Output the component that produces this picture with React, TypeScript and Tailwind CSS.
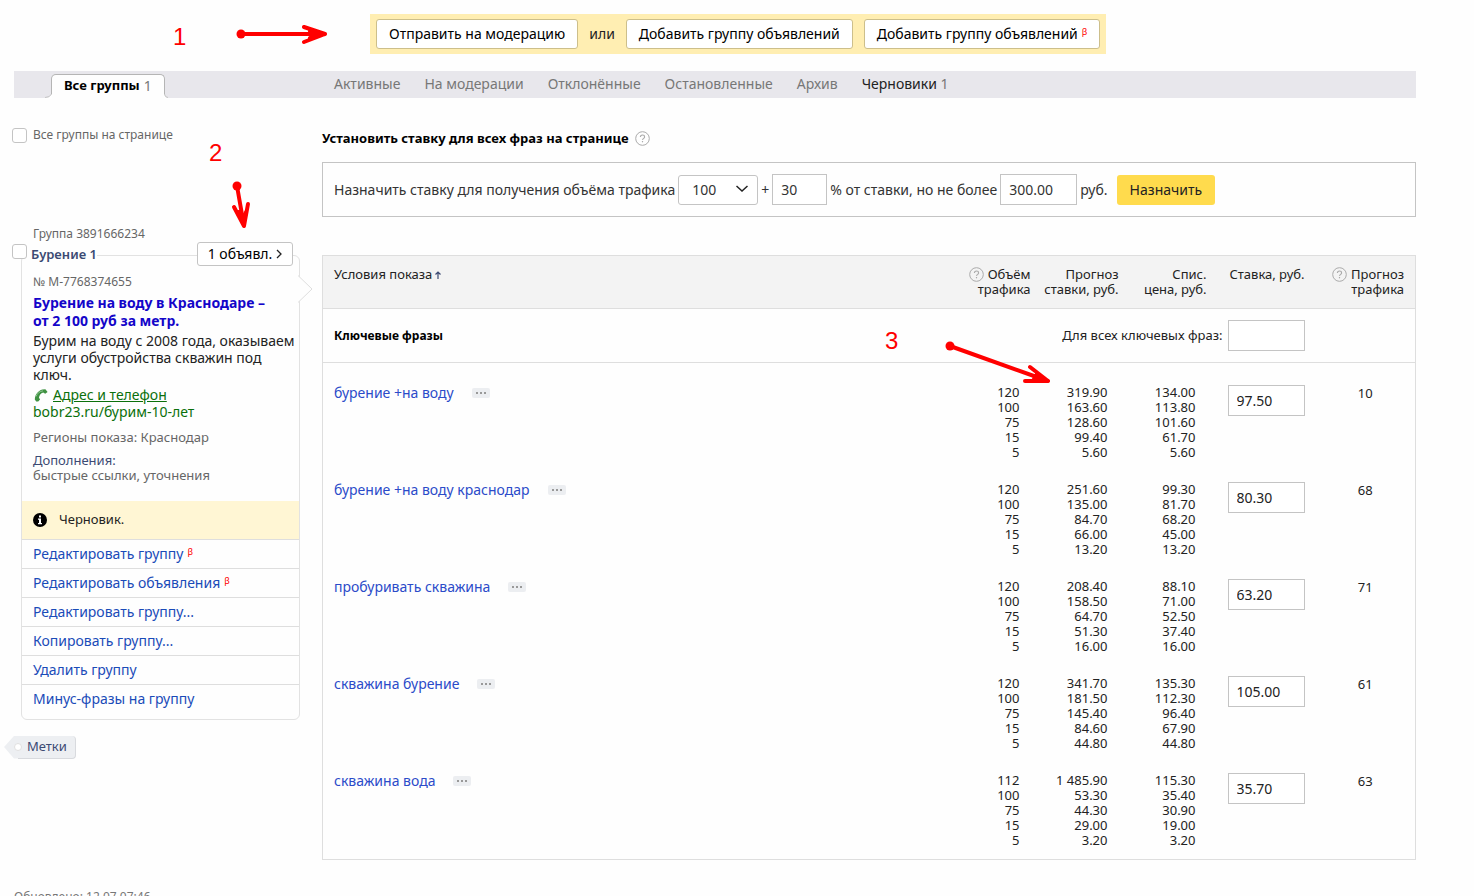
import type { ReactNode } from 'react'

interface Bid {
  volume: string
  forecast: string
  price: string
}

interface Phrase {
  id: number
  text: string
  bids: Bid[]
  bid: string
  traffic: number
}

const toBids = (rows: string[][]): Bid[] =>
  rows.map(([volume, forecast, price]) => ({ volume, forecast, price }))

const phrases: Phrase[] = [
  {
    id: 1,
    text: 'бурение +на воду',
    bids: toBids([['120', '319.90', '134.00'], ['100', '163.60', '113.80'], ['75', '128.60', '101.60'], ['15', '99.40', '61.70'], ['5', '5.60', '5.60']]),
    bid: '97.50',
    traffic: 10
  },
  {
    id: 2,
    text: 'бурение +на воду краснодар',
    bids: toBids([['120', '251.60', '99.30'], ['100', '135.00', '81.70'], ['75', '84.70', '68.20'], ['15', '66.00', '45.00'], ['5', '13.20', '13.20']]),
    bid: '80.30',
    traffic: 68
  },
  {
    id: 3,
    text: 'пробуривать скважина',
    bids: toBids([['120', '208.40', '88.10'], ['100', '158.50', '71.00'], ['75', '64.70', '52.50'], ['15', '51.30', '37.40'], ['5', '16.00', '16.00']]),
    bid: '63.20',
    traffic: 71
  },
  {
    id: 4,
    text: 'скважина бурение',
    bids: toBids([['120', '341.70', '135.30'], ['100', '181.50', '112.30'], ['75', '145.40', '96.40'], ['15', '84.60', '67.90'], ['5', '44.80', '44.80']]),
    bid: '105.00',
    traffic: 61
  },
  {
    id: 5,
    text: 'скважина вода',
    bids: toBids([['112', '1 485.90', '115.30'], ['100', '53.30', '35.40'], ['75', '44.30', '30.90'], ['15', '29.00', '19.00'], ['5', '3.20', '3.20']]),
    bid: '35.70',
    traffic: 63
  }
]

const tabs = ['Активные', 'На модерации', 'Отклонённые', 'Остановленные', 'Архив']

const groupActions = [
  { label: 'Редактировать группу', beta: true },
  { label: 'Редактировать объявления', beta: true },
  { label: 'Редактировать группу...', beta: false },
  { label: 'Копировать группу...', beta: false },
  { label: 'Удалить группу', beta: false },
  { label: 'Минус-фразы на группу', beta: false }
]

function Beta() {
  return <sup className="relative -top-1 ml-1 align-baseline text-[9px] leading-none text-[#f00]">β</sup>
}

function HelpIcon() {
  return (
    <svg className="inline-block size-[15px] shrink-0" viewBox="0 0 15 15" fill="none" stroke="#aaa">
      <circle cx="7.5" cy="7.5" r="6.8" />
      <path d="M5.4 6.1c0-1.3.9-2.1 2.1-2.1s2.1.8 2.1 1.9c0 1.4-2 1.5-2 3" strokeWidth="1.1" />
      <path d="M7.5 10v1.3" strokeWidth="1.2" />
    </svg>
  )
}

function ActionButton({ children }: { children: ReactNode }) {
  return (
    <button className="h-[30px] rounded-[3px] border border-[#cdbf8b] bg-white px-[12px] text-sm whitespace-nowrap text-black">
      {children}
    </button>
  )
}

function Checkbox({ label, id }: { label: string; id: string }) {
  return (
    <input
      type="checkbox"
      id={id}
      aria-label={label}
      className="size-[15px] shrink-0 appearance-none rounded-[3px] border border-[#c4c4c4] bg-white"
    />
  )
}

interface ArrowProps {
  className: string
  width: number
  height: number
  dot: [number, number]
  line: string
}

function Arrow({ className, width, height, dot, line }: ArrowProps) {
  return (
    <svg className={className} width={width} height={height} fill="none" stroke="#f00" strokeWidth="4" strokeLinecap="round" strokeLinejoin="round">
      <circle cx={dot[0]} cy={dot[1]} r="4.5" fill="#f00" stroke="none" />
      <path d={line} />
    </svg>
  )
}

function Annotations() {
  return (
    <div className="pointer-events-none absolute inset-0 z-20 font-['Liberation_Sans',sans-serif] text-2xl leading-6 text-[#f00]">
      <span className="absolute top-[25px] left-[173px]">1</span>
      <Arrow className="absolute top-5 left-[230px]" width={100} height={28} dot={[11, 14]} line="M11 14H95M74 7L95 14L74 22M80 11L95 14L80 18" />
      <span className="absolute top-[141px] left-[209px]">2</span>
      <Arrow className="absolute top-[176px] left-[226px]" width={30} height={56} dot={[11, 10]} line="M11 10L18 50M8 31L18 50L22 28M13 36L18 50L20 36" />
      <span className="absolute top-[329px] left-[885px]">3</span>
      <Arrow className="absolute top-[336px] left-[940px]" width={114} height={52} dot={[10, 10]} line="M10 10L108 45M90 31L108 45L85 45M97 38L108 45L94 43" />
    </div>
  )
}

function GroupCard() {
  return (
    <section className="mt-[81px]">
      <div className="pl-[19px] text-xs leading-[17px] text-[#666]">Группа 3891666234</div>
      <div className="relative z-10 -ml-[2px] flex h-6 items-center">
        <div className="flex h-6 items-start pt-[2px]">
          <Checkbox id="group" label="Выбрать группу" />
        </div>
        <label htmlFor="group" className="bg-[#fefefe] pl-1 text-[13px] leading-5 font-semibold text-[#3b4a73]">Бурение 1</label>
        <button className="mr-[7px] ml-auto flex h-6 w-24 items-center justify-center gap-1 rounded-[3px] border border-[#c4c4c4] bg-white text-sm text-black">
          1 объявл.
          <svg className="h-[10px] w-[6px]" viewBox="0 0 6 10" fill="none" stroke="#222" strokeWidth="1.3">
            <path d="M1 1L5 5L1 9" />
          </svg>
        </button>
      </div>
      <div className="relative -mt-[11px] ml-[7px] rounded-md border border-[#e2e2e2] pb-[6px]">
        <svg className="absolute top-[19px] -right-[14px] h-7 w-[15px]" viewBox="0 0 15 28">
          <path d="M0 0.5L14 14L0 27.5" fill="#fefefe" stroke="#dedede" />
        </svg>
        <div className="px-[11px] pt-[17px] pb-[18px]">
          <div className="text-xs leading-[18px] text-[#666]">№ M-7768374655</div>
          <h3 className="mt-[3px] text-sm leading-[18px] font-bold whitespace-nowrap text-[#1405c9]">
            Бурение на воду в Краснодаре –<br />от 2 100 руб за метр.
          </h3>
          <p className="mt-[2px] text-sm leading-[17px] whitespace-nowrap text-[#222]">
            Бурим на воду с 2008 года, оказываем<br />услуги обустройства скважин под<br />ключ.
          </p>
          <div className="mt-[3px] flex h-[17px] items-center gap-1">
            <svg className="size-4" viewBox="0 0 16 16" fill="#3f9142">
              <path d="M3.2 14.5L1.800 12.500C2 7.900 4.800 3.800 9.400 2.600L12.400 2.300L14.600 5L12.200 6.700L10.200 5.600C7.600 6.500 6.300 8.400 6 10.700L7.100 12.500L5.200 14.500Z" />
              <path d="M3 9.500Q5 4.500 10 3.800" fill="none" stroke="#8fc592" strokeWidth="1" />
            </svg>
            <a href="#contacts" className="text-sm leading-[17px] text-[#0b700b] underline">Адрес и телефон</a>
          </div>
          <div className="text-sm leading-[17px] text-[#0b700b]">bobr23.ru/бурим-10-лет</div>
          <div className="mt-[10px] text-[13px] leading-[15px] text-[#666]">Регионы показа: Краснодар</div>
          <div className="mt-2 text-[13px] leading-[15px] text-[#3b4a73]">Дополнения:</div>
          <div className="text-[13px] leading-[15px] text-[#666]">быстрые ссылки, уточнения</div>
        </div>
        <div className="flex h-[38px] items-center gap-3 bg-[#fff6d4] px-[11px] text-[13px] text-[#222]">
          <svg className="size-[14px]" viewBox="0 0 14 14">
            <circle cx="7" cy="7" r="7" fill="#000" />
            <path d="M6 2.500h2v2h-2zM5 5.500h3v4.500h1v1.200h-4v-1.200h1v-3.300h-1z" fill="#fff" />
          </svg>
          Черновик.
        </div>
        <ul>
          {groupActions.map((action) => (
            <li key={action.label} className="h-[29px] border-t border-[#dedede] px-[11px] text-sm leading-7">
              <a href="#action" className="text-[#1a4bb8]">{action.label}</a>
              {action.beta && <Beta />}
            </li>
          ))}
        </ul>
      </div>
      <a href="#labels" className="relative mt-4 -ml-[10px] inline-flex h-[23px] items-center">
        <svg className="h-[23px] w-[14px]" viewBox="0 0 14 23">
          <path d="M14 0H10L0 11L10 22.500H14Z" fill="#edeff2" />
        </svg>
        <span className="h-[23px] rounded-r-[4px] border-r border-b border-[#d8dade] bg-[#edeff2] pr-2 pl-[9px] text-[13px] leading-5 text-[#3b4a73]">
          Метки
        </span>
        <i className="absolute top-[7px] left-[10px] size-2 rounded-full border border-[#e0e0e0] bg-white" />
      </a>
    </section>
  )
}

function BidForm() {
  return (
    <form className="mt-[15px] flex h-[55px] items-center border border-[#c4c4c4] pl-[11px] text-sm whitespace-nowrap text-[#333]">
      <label htmlFor="volume">Назначить ставку для получения объёма трафика</label>
      <div className="relative ml-[3px]">
        <select id="volume" className="h-[30px] w-[80px] appearance-none rounded-[3px] border border-[#c4c4c4] bg-white pl-[13px]">
          <option>100</option>
        </select>
        <svg className="absolute top-[10px] right-[10px] h-2 w-3" viewBox="0 0 12 8" fill="none" stroke="#222" strokeWidth="1.500">
          <path d="M0.500 1L6 6L11.500 1" />
        </svg>
      </div>
      <label htmlFor="percent" className="mx-[3px]">+</label>
      <input id="percent" defaultValue="30" className="h-[31px] w-[55px] border border-[#c4c4c4] bg-white px-2" />
      <label htmlFor="limit" className="mx-[3px]">% от ставки, но не более</label>
      <input id="limit" defaultValue="300.00" className="h-[31px] w-[77px] border border-[#c4c4c4] bg-white px-2" />
      <span className="ml-[3px]">руб.</span>
      <button type="button" className="ml-[9px] h-[30px] rounded-[3px] bg-[#ffdb4d] px-[13px] text-[#222]">Назначить</button>
    </form>
  )
}

function PhraseTable() {
  return (
    <table className="mt-[38px] w-full table-fixed border-collapse border border-[#dedede] text-[13px] leading-[15px] text-[#222]">
      <colgroup>
        <col />
        <col className="w-[100px]" />
        <col className="w-[88px]" />
        <col className="w-[88px]" />
        <col className="w-[98px]" />
        <col className="w-[100px]" />
      </colgroup>
      <thead>
        <tr className="h-[53px] border-b border-[#dedede] bg-[#f3f3f3] align-top [&>th]:pt-[11px] [&>th]:pr-[11px] [&>th]:text-right [&>th]:font-normal">
          <th>
            <div className="flex items-center gap-[3px] pl-[11px]">
              Условия показа
              <svg className="h-2 w-[6px]" viewBox="0 0 6 8" fill="none" stroke="#3b4a73" strokeWidth="1.200">
                <path d="M3 8V1M0.500 3.500L3 1L5.500 3.500" />
              </svg>
            </div>
          </th>
          <th>
            <div className="flex justify-end gap-1"><HelpIcon /> Объём</div>
            трафика
          </th>
          <th>Прогноз<br />ставки, руб.</th>
          <th>Спис.<br />цена, руб.</th>
          <th>Ставка, руб.</th>
          <th>
            <div className="flex justify-end gap-1"><HelpIcon /> Прогноз</div>
            трафика
          </th>
        </tr>
      </thead>
      <tbody>
        <tr className="h-[54px] border-b border-[#dedede]">
          <td className="pl-[11px] text-xs font-bold text-black">Ключевые фразы</td>
          <td colSpan={4} className="pr-[11px]">
            <div className="flex items-center justify-end gap-[5px]">
              <label htmlFor="all-phrases">Для всех ключевых фраз:</label>
              <input id="all-phrases" className="h-[31px] w-[77px] border border-[#c4c4c4] bg-white px-2 text-sm" />
            </div>
          </td>
          <td />
        </tr>
        {phrases.map((phrase) => (
          <tr key={phrase.id} className="align-top [&>td]:pt-[22px] last:[&>td]:pb-[11px]">
            <td>
              <div className="flex items-center gap-[18px] pl-[11px]">
                <a href="#phrase" className="text-sm leading-[15px] text-[#2b4bc9]">{phrase.text}</a>
                <button aria-label="Ещё" className="flex h-[10px] w-[18px] items-center justify-center gap-[2px] rounded-[2px] bg-[#eceef1]">
                  <i className="size-[2px] bg-[#999]" />
                  <i className="size-[2px] bg-[#999]" />
                  <i className="size-[2px] bg-[#999]" />
                </button>
              </div>
            </td>
            <td className="pr-[22px] text-right">
              {phrase.bids.map((bid) => <div key={bid.volume}>{bid.volume}</div>)}
            </td>
            <td className="pr-[22px] text-right">
              {phrase.bids.map((bid) => <div key={bid.volume}>{bid.forecast}</div>)}
            </td>
            <td className="pr-[22px] text-right">
              {phrase.bids.map((bid) => <div key={bid.volume}>{bid.price}</div>)}
            </td>
            <td className="pl-[10px]">
              <input aria-label="Ставка" defaultValue={phrase.bid} className="block h-[31px] w-[77px] border border-[#c4c4c4] bg-white px-2 text-sm" />
            </td>
            <td className="text-center leading-[17px]">{phrase.traffic}</td>
          </tr>
        ))}
      </tbody>
    </table>
  )
}

export default function App() {
  return (
    <div className="relative h-screen overflow-hidden bg-[#fefefe] pt-[14px] pr-[58px] pl-[14px] font-['Noto_Sans',sans-serif]">
      <Annotations />

      <div className="ml-[356px] flex h-10 w-fit items-center gap-[11px] bg-[#ffeeb2] px-[6px] text-sm text-[#222]">
        <ActionButton>Отправить на модерацию</ActionButton>
        <span>или</span>
        <ActionButton>Добавить группу объявлений</ActionButton>
        <ActionButton>Добавить группу объявлений<Beta /></ActionButton>
      </div>

      <nav className="mt-[17px] flex h-[27px] items-start bg-[#e8e7ec] text-sm leading-[26px] text-[#777]">
        <div className="flex w-80 shrink-0 pl-[37px]">
          <a href="#all" className="relative mt-[3px] flex h-6 gap-1 rounded-t-[5px] border-x border-t border-[#b5b5b5] bg-[#fefefe] px-3 leading-[21px]">
            <b className="text-[13px] font-bold text-black">Все группы</b> 1
            <svg className="absolute -bottom-px -left-[7px] h-[5px] w-[7px]" viewBox="0 0 7 5">
              <path d="M0 4Q5 4 6.500 0H7V5H0Z" fill="#fff" stroke="none" />
              <path d="M0 3.500Q5 3.500 6.500 0" fill="none" stroke="#c4c4c4" />
            </svg>
            <svg className="absolute -right-1 -bottom-px h-[5px] w-1" viewBox="0 0 4 5">
              <path d="M4 4Q1 4 0.500 0H0V5H4Z" fill="#fff" />
              <path d="M4 3.500Q1 3.500 0.500 0" fill="none" stroke="#c4c4c4" />
            </svg>
          </a>
        </div>
        <div className="flex gap-6">
          {tabs.map((tab) => <a key={tab} href="#tab">{tab}</a>)}
          <a href="#drafts"><span className="text-[#222]">Черновики</span> 1</a>
        </div>
      </nav>

      <div className="flex">
        <aside className="w-[286px] shrink-0 pt-7">
          <div className="-ml-[2px] flex h-[18px] items-center gap-[6px]">
            <Checkbox id="all-groups" label="Все группы на странице" />
            <label htmlFor="all-groups" className="text-xs text-[#666]">Все группы на странице</label>
          </div>
          <GroupCard />
        </aside>

        <main className="ml-[22px] min-w-0 flex-1 pt-8">
          <h2 className="flex h-[17px] items-center gap-[6px] text-[13px] font-bold text-black">
            Установить ставку для всех фраз на странице <HelpIcon />
          </h2>
          <BidForm />
          <PhraseTable />
          <footer className="mt-7 -ml-[308px] text-xs leading-[18px] text-[#777]">Обновлено: 12.07 07:46</footer>
        </main>
      </div>
    </div>
  )
}
